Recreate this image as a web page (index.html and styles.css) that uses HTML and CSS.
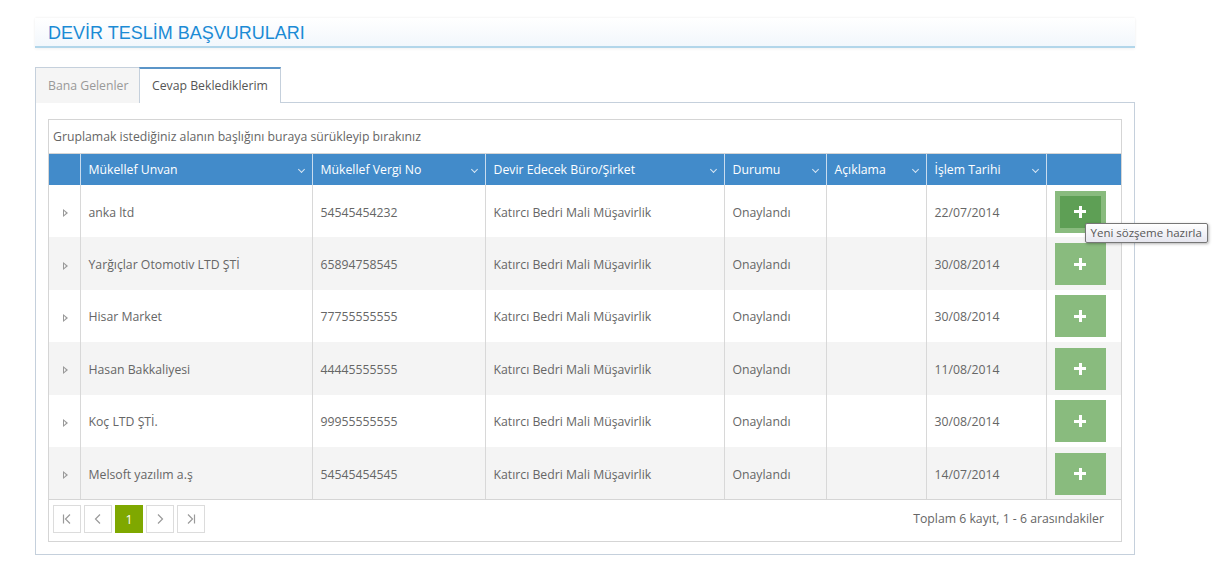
FILE: index.html
```html
<!DOCTYPE html>
<html lang="tr">
<head>
<meta charset="utf-8">
<link rel="stylesheet" href="styles.css">
</head>
<body>
<div class="page">
  <div class="titlebar"><h1>DEVİR TESLİM BAŞVURULARI</h1></div>
  <div class="tabs">
    <div class="tab">Bana Gelenler</div>
    <div class="tab active">Cevap Beklediklerim</div>
  </div>
  <div class="panel">
    <div class="grid">
      <div class="grouping">Gruplamak istediğiniz alanın başlığını buraya sürükleyip bırakınız</div>
      <table>
        <colgroup>
          <col class="c0"><col class="c1"><col class="c2"><col class="c3"><col class="c4"><col class="c5"><col class="c6"><col class="c7">
        </colgroup>
        <thead>
          <tr>
            <th></th>
            <th><span>Mükellef Unvan</span><i class="chev"></i></th>
            <th><span>Mükellef Vergi No</span><i class="chev"></i></th>
            <th><span>Devir Edecek Büro/Şirket</span><i class="chev"></i></th>
            <th><span>Durumu</span><i class="chev"></i></th>
            <th><span>Açıklama</span><i class="chev"></i></th>
            <th><span>İşlem Tarihi</span><i class="chev"></i></th>
            <th></th>
          </tr>
        </thead>
        <tbody>
          <tr>
            <td class="exp"><i class="tri"></i></td><td>anka ltd</td><td>54545454232</td><td>Katırcı Bedri Mali Müşavirlik</td><td>Onaylandı</td><td></td><td>22/07/2014</td>
            <td class="act"><span class="addbtn hover"><i class="plus"></i></span><span class="tooltip">Yeni sözşeme hazırla</span></td>
          </tr>
          <tr class="alt">
            <td class="exp"><i class="tri"></i></td><td>Yarğıçlar Otomotiv LTD ŞTİ</td><td>65894758545</td><td>Katırcı Bedri Mali Müşavirlik</td><td>Onaylandı</td><td></td><td>30/08/2014</td>
            <td class="act"><span class="addbtn"><i class="plus"></i></span></td>
          </tr>
          <tr>
            <td class="exp"><i class="tri"></i></td><td>Hisar Market</td><td>77755555555</td><td>Katırcı Bedri Mali Müşavirlik</td><td>Onaylandı</td><td></td><td>30/08/2014</td>
            <td class="act"><span class="addbtn"><i class="plus"></i></span></td>
          </tr>
          <tr class="alt">
            <td class="exp"><i class="tri"></i></td><td>Hasan Bakkaliyesi</td><td>44445555555</td><td>Katırcı Bedri Mali Müşavirlik</td><td>Onaylandı</td><td></td><td>11/08/2014</td>
            <td class="act"><span class="addbtn"><i class="plus"></i></span></td>
          </tr>
          <tr>
            <td class="exp"><i class="tri"></i></td><td>Koç LTD ŞTİ.</td><td>99955555555</td><td>Katırcı Bedri Mali Müşavirlik</td><td>Onaylandı</td><td></td><td>30/08/2014</td>
            <td class="act"><span class="addbtn"><i class="plus"></i></span></td>
          </tr>
          <tr class="alt">
            <td class="exp"><i class="tri"></i></td><td>Melsoft yazılım a.ş</td><td>54545454545</td><td>Katırcı Bedri Mali Müşavirlik</td><td>Onaylandı</td><td></td><td>14/07/2014</td>
            <td class="act"><span class="addbtn"><i class="plus"></i></span></td>
          </tr>
        </tbody>
      </table>
      <div class="pager">
        <div class="pages">
          <span class="pbtn"><svg width="12" height="12" viewBox="0 0 12 12"><path d="M2.5 1.5v9M9 1.5L4.5 6L9 10.5" fill="none" stroke="#9a9a9a" stroke-width="1.2"/></svg></span>
          <span class="pbtn"><svg width="12" height="12" viewBox="0 0 12 12"><path d="M8 1.5L3.5 6L8 10.5" fill="none" stroke="#9a9a9a" stroke-width="1.2"/></svg></span>
          <span class="pbtn current">1</span>
          <span class="pbtn"><svg width="12" height="12" viewBox="0 0 12 12"><path d="M4 1.5L8.5 6L4 10.5" fill="none" stroke="#9a9a9a" stroke-width="1.2"/></svg></span>
          <span class="pbtn"><svg width="12" height="12" viewBox="0 0 12 12"><path d="M3 1.5L7.5 6L3 10.5M9.5 1.5v9" fill="none" stroke="#9a9a9a" stroke-width="1.2"/></svg></span>
        </div>
        <div class="info">Toplam 6 kayıt, 1 - 6 arasındakiler</div>
      </div>
    </div>
  </div>
</div>
</body>
</html>
```

FILE: styles.css
```css
* { box-sizing: border-box; }
html, body { margin: 0; padding: 0; background: #fff; }
body { font-family: "Open Sans", "Noto Sans", sans-serif; font-size: 12px; color: #666; }

.page { width: 1100px; margin-left: 35px; padding-top: 18px; }

.titlebar {
  height: 30px;
  background: linear-gradient(#ffffff, #f2f7fc);
  border-bottom: 2px solid #b2d6ea;
  box-shadow: 0 1px 3px rgba(0,0,0,0.06), 0 -1px 2px rgba(0,0,0,0.03);
  padding-left: 13px;
}
.titlebar h1 {
  margin: 0;
  font-family: "Liberation Sans", Arial, sans-serif;
  font-weight: normal;
  font-size: 18px;
  line-height: 30px;
  color: #1b8bd5;
}

.tabs { display: flex; margin-top: 19px; height: 36px; position: relative; z-index: 1; }
.tab {
  height: 36px;
  line-height: 36px;
  padding: 0 0 0 12px;
  border: 1px solid #c5d0dc;
  border-bottom: none;
  background: #f5f5f5;
  color: #999;
  font-size: 12.25px;
  white-space: nowrap;
}
.tab:first-child { width: 105px; }
.tab.active {
  width: 142px;
  margin-left: -1px;
  background: #fff;
  color: #555;
  border-top: 2px solid #5b95c8;
  line-height: 34px;
}

.panel {
  border: 1px solid #c5d0dc;
  margin-top: -1px;
  padding: 16px 12px 12px 12px;
}

.grid { border: 1px solid #d5d5d5; }
.grouping {
  height: 34px;
  line-height: 33px;
  padding-left: 4px;
  color: #666;
  font-size: 12.25px;
  border-bottom: 1px solid #d5d5d5;
}

table { width: 100%; border-collapse: collapse; table-layout: fixed; }
col.c0 { width: 31px; }
col.c1 { width: 232px; }
col.c2 { width: 173px; }
col.c3 { width: 239px; }
col.c4 { width: 102px; }
col.c5 { width: 100px; }
col.c6 { width: 120px; }
col.c7 { width: 75px; }

thead th {
  background: #428bca;
  color: #fff;
  font-weight: normal;
  text-align: left;
  height: 31px;
  padding: 0 8px;
  font-size: 12.25px;
  border-left: 1px solid #c9dcee;
  white-space: nowrap;
  position: relative;
}
thead th:first-child { border-left: none; }
.chev {
  position: absolute;
  right: 8px;
  top: 13px;
  width: 5px;
  height: 5px;
  border-right: 1px solid #d8e6f3;
  border-bottom: 1px solid #d8e6f3;
  transform: rotate(45deg);
}

tbody td {
  height: 52.4px;
  padding: 2px 8px 0 8px;
  color: #666;
  font-size: 12.25px;
  border-left: 1px solid #d8d8d8;
  white-space: nowrap;
}
tbody td:first-child { border-left: none; }
tbody tr.alt td { background: #f4f4f4; }
td.exp { padding: 0 0 0 14px; vertical-align: middle; }
.tri {
  display: inline-block;
  margin-top: 8px;
  width: 0; height: 0;
  border-left: 5px solid #999;
  border-top: 4px solid transparent;
  border-bottom: 4px solid transparent;
  position: relative;
}
.tri::after {
  content: "";
  position: absolute;
  left: -4px;
  top: -2px;
  border-left: 2.5px solid #fff;
  border-top: 2px solid transparent;
  border-bottom: 2px solid transparent;
}
tr.alt .tri::after { border-left-color: #f4f4f4; }

td.act { padding: 0 0 0 8px; position: relative; }
.addbtn {
  display: flex;
  align-items: center;
  justify-content: center;
  width: 51px;
  height: 42px;
  background: #89bb7e;
  margin-top: 1px;
}
.addbtn.hover { background: #5e9f55; border: 5px solid #89bb7e; }
.plus { position: relative; width: 12px; height: 12px; display: block; }
.plus::before, .plus::after { content: ""; position: absolute; background: #fff; }
.plus::before { left: 0; top: 4.5px; width: 12px; height: 3px; }
.plus::after { left: 4.5px; top: 0; width: 3px; height: 12px; }

.tooltip {
  position: absolute;
  left: 38px;
  top: 38px;
  z-index: 5;
  background: linear-gradient(#ffffff, #e6e6ef);
  border: 1px solid #767676;
  border-radius: 2px;
  box-shadow: 1px 1px 3px rgba(0,0,0,0.3);
  color: #575757;
  font-size: 11.5px;
  line-height: 18px;
  padding: 0 5px;
  white-space: nowrap;
}

.pager {
  border-top: 1px solid #d5d5d5;
  height: 42px;
  display: flex;
  align-items: flex-start;
  justify-content: space-between;
  padding: 5px 17px 0 4px;
}
.pages { display: flex; gap: 3px; }
.pbtn {
  width: 28px; height: 28px;
  border: 1px solid #dcdcdc;
  display: flex; align-items: center; justify-content: center;
  color: #999;
  background: #fff;
  font-size: 12.5px;
}
.pbtn.current { background: #7fa800; border-color: #7fa800; color: #fff; }
.info { color: #666; font-size: 12.25px; line-height: 28px; }
```
